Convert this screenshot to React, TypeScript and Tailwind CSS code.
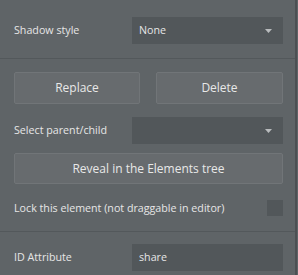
import React from "react";

const Arrow = () => (
  <svg width="7" height="4" viewBox="0 0 7 4" className="shrink-0">
    <path d="M0 0 H7 L3.5 4 Z" fill="#b9bcbe" />
  </svg>
);

const Select = ({ value }: { value?: string }) => (
  <div className="w-[151px] h-[27px] bg-[#52575a] flex items-center justify-between pl-[7px] pr-[11px] text-[10.7px] text-[#e6e6e6]">
    <span>{value ?? ""}</span>
    <Arrow />
  </div>
);

const Button = ({ children, className = "" }: { children: React.ReactNode; className?: string }) => (
  <div
    className={
      "flex items-center justify-center bg-[#676b6e] border border-[#717578] rounded-[2px] text-[12px] text-[#e8e8e8] " +
      className
    }
  >
    {children}
  </div>
);

export default function App() {
  return (
    <div
      className="w-[298px] h-[275px] bg-[#5f6467] flex overflow-hidden"
      style={{ fontFamily: '"Open Sans", "Noto Sans", sans-serif' }}
    >
      <div className="flex-1 flex flex-col text-[#e6e6e6] text-[10.7px]">
        <div className="pl-[14px] pr-[12px] pt-[17px] pb-[14px]">
          <div className="flex items-center justify-between h-[27px]">
            <span>Shadow style</span>
            <Select value="None" />
          </div>
        </div>
        <div className="h-px bg-[#53585b]" />
        <div className="pl-[14px] pr-[12px] pt-[13px] pb-[15px] flex flex-col">
          <div className="flex justify-between">
            <Button className="w-[126px] h-[32px]">Replace</Button>
            <Button className="w-[127px] h-[32px]">Delete</Button>
          </div>
          <div className="flex items-center justify-between h-[27px] mt-[13px]">
            <span>Select parent/child</span>
            <Select />
          </div>
          <Button className="h-[31px] mt-[9px]">Reveal in the Elements tree</Button>
          <div className="flex items-center justify-between h-[16px] mt-[16px]">
            <span>Lock this element (not draggable in editor)</span>
            <div className="w-[16px] h-[16px] bg-[#52575a]" />
          </div>
        </div>
        <div className="h-px bg-[#53585b]" />
        <div className="pl-[14px] pr-[12px] pt-[12px]">
          <div className="flex items-center justify-between h-[27px]">
            <span>ID Attribute</span>
            <div className="w-[151px] h-[27px] bg-[#52575a] flex items-center pl-[7px] text-[10.7px] text-[#e6e6e6]">
              share
            </div>
          </div>
        </div>
      </div>
      <div className="w-[2px] bg-[#4c5053]" />
      <div className="w-px bg-[#5f6467]" />
    </div>
  );
}
